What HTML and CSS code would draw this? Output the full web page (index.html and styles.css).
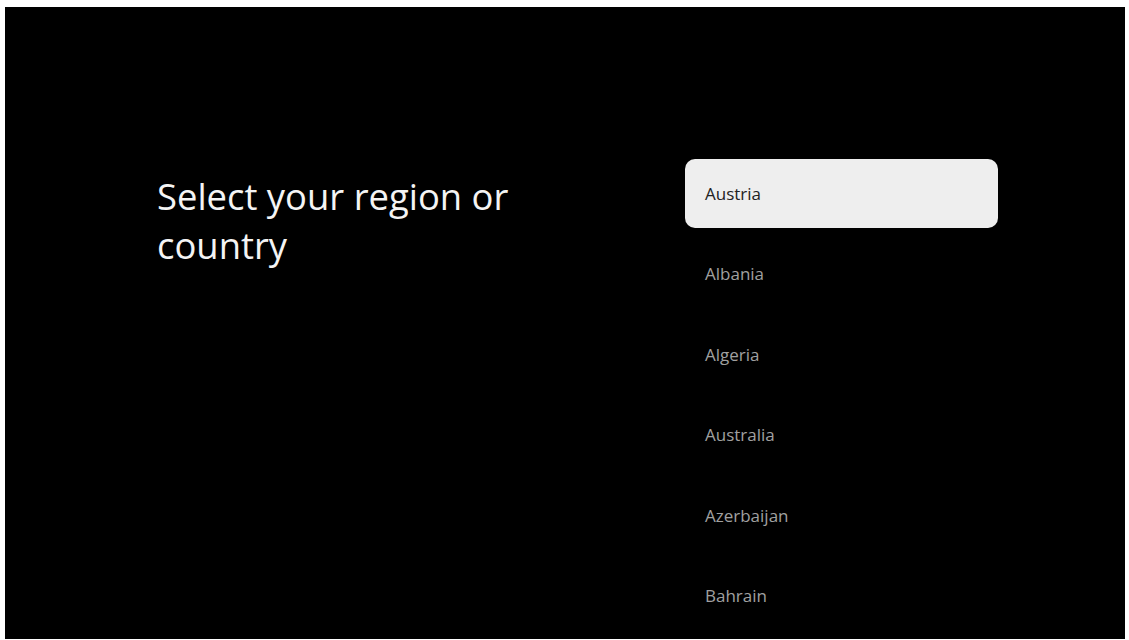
FILE: index.html
```html
<!DOCTYPE html>
<html lang="en">
<head>
  <meta charset="UTF-8" />
  <meta name="viewport" content="width=device-width, initial-scale=1.0"/>
  <title>Select your region or country</title>
  <link rel="stylesheet" href="styles.css">
</head>
<body>
  <!-- TV setup screen -->
  <div class="screen">
    <div class="intro">
      <h1 class="title">Select your region or country</h1>
    </div>

    <ul class="country-list">
      <li class="country selected">Austria</li>
      <li class="country">Albania</li>
      <li class="country">Algeria</li>
      <li class="country">Australia</li>
      <li class="country">Azerbaijan</li>
      <li class="country">Bahrain</li>
    </ul>
  </div>
</body>
</html>
```

FILE: styles.css
```css
/* Page frame */
html, body {
  margin: 0;
  padding: 0;
  background: #ffffff;
  height: 100%;
}

body {
  padding: 7px 4px 1px 5px;
  box-sizing: border-box;
  font-family: 'Open Sans', sans-serif;
}

/* Black TV screen */
.screen {
  background: #000000;
  height: 100%;
  display: flex;
  align-items: flex-start;
  padding: 146px 0 0 152px;
  box-sizing: border-box;
  overflow: hidden;
}

.intro {
  width: 528px;
}

.title {
  max-width: 380px;
  margin: 19px 0 0;
  font-size: 36.4px;
  line-height: 49px;
  font-weight: 400;
  color: #f4f4f4;
}

/* Country list */
.country-list {
  list-style: none;
  margin: 0;
  padding: 0;
  width: 313px;
}

.country {
  height: 80.5px;
  display: flex;
  align-items: center;
  padding: 0 20px;
  box-sizing: border-box;
  font-size: 17px;
  font-weight: 500;
  color: #a0a0a0;
}

.country.selected {
  height: 69px;
  margin: 6px 0 5.5px;
  background: #eeeeee;
  border-radius: 10px;
  color: #222222;
}
```
